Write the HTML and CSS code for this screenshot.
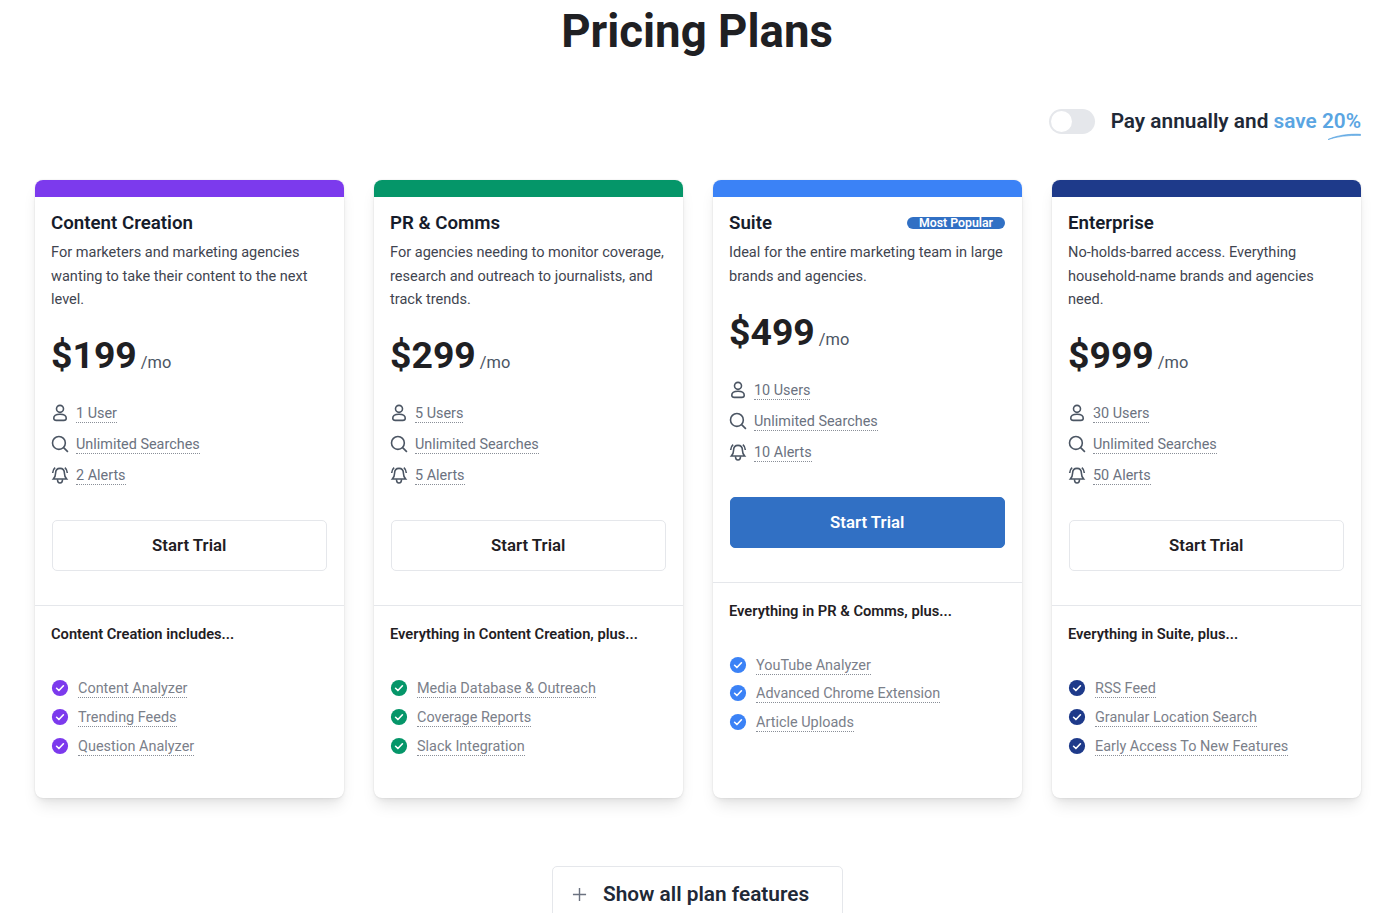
FILE: index.html
```html
<!DOCTYPE html>
<html lang="en">
<head>
  <meta charset="UTF-8">
  <meta name="viewport" content="width=device-width, initial-scale=1.0">
  <title>Pricing Plans</title>
  <link rel="stylesheet" href="styles.css">
</head>
<body>
  <svg class="sprite" width="0" height="0">
    <symbol id="i-user" viewBox="0 0 24 24"><circle cx="12" cy="7" r="4.200"/><path d="M4.500 18.200c0-3 3.400-4.700 7.500-4.700s7.500 1.700 7.500 4.700c0 1.700-1.300 2.600-3 2.600H7.500c-1.700 0-3-.9-3-2.600z"/></symbol>
    <symbol id="i-search" viewBox="0 0 24 24"><circle cx="10.700" cy="10.700" r="7.700"/><path d="M16.300 16.300L21.500 21.500"/></symbol>
    <symbol id="i-bell" viewBox="0 0 24 24"><path d="M12 4c-3.200 0-5.300 2.500-5.300 5.800 0 3.600-1.200 5.200-2.700 7h16c-1.500-1.800-2.700-3.400-2.700-7C17.300 6.500 15.200 4 12 4z"/><path d="M9 17c0 2.800 1.300 4.500 3 4.500s3-1.700 3-4.500"/><path d="M3.200 9.500c.1-2.800 1-4.800 3-6.300M20.800 9.500c-.1-2.800-1-4.800-3-6.300"/></symbol>
    <symbol id="i-check" viewBox="0 0 20 20"><circle cx="10" cy="10" r="9"/><path class="tick" d="M6.200 10.300l2.600 2.500 5-5.300"/></symbol>
  </svg>

  <h1 class="page-title">Pricing Plans</h1>

  <div class="billing">
    <span class="toggle"><span class="knob"></span></span>
    <span class="billing-text">Pay annually and <span class="save">save <span class="pct">20%<svg class="swoosh" viewBox="0 0 34 8" preserveAspectRatio="none"><path d="M1 7.500C9 3 21 .8 33.500 1.500L33.500 2.800C21 2.300 10 4 1 7.500z"/></svg></span></span></span>
  </div>

  <div class="plans">
    <section class="plan plan-purple">
      <div class="plan-bar"></div>
      <div class="plan-top">
        <div class="plan-head"><h2>Content Creation</h2></div>
        <p class="plan-desc">For marketers and marketing agencies wanting to take their content to the next level.</p>
        <div class="price"><strong>$199</strong> <span>/mo</span></div>
        <ul class="limits">
          <li><svg class="ico"><use href="#i-user"/></svg><span class="dotted">1 User</span></li>
          <li><svg class="ico"><use href="#i-search"/></svg><span class="dotted">Unlimited Searches</span></li>
          <li><svg class="ico"><use href="#i-bell"/></svg><span class="dotted">2 Alerts</span></li>
        </ul>
        <button class="trial">Start Trial</button>
      </div>
      <div class="plan-bottom">
        <h3>Content Creation includes...</h3>
        <ul class="features">
          <li><svg class="check"><use href="#i-check"/></svg><span class="dotted">Content Analyzer</span></li>
          <li><svg class="check"><use href="#i-check"/></svg><span class="dotted">Trending Feeds</span></li>
          <li><svg class="check"><use href="#i-check"/></svg><span class="dotted">Question Analyzer</span></li>
        </ul>
      </div>
    </section>

    <section class="plan plan-green">
      <div class="plan-bar"></div>
      <div class="plan-top">
        <div class="plan-head"><h2>PR &amp; Comms</h2></div>
        <p class="plan-desc">For agencies needing to monitor coverage, research and outreach to journalists, and track trends.</p>
        <div class="price"><strong>$299</strong> <span>/mo</span></div>
        <ul class="limits">
          <li><svg class="ico"><use href="#i-user"/></svg><span class="dotted">5 Users</span></li>
          <li><svg class="ico"><use href="#i-search"/></svg><span class="dotted">Unlimited Searches</span></li>
          <li><svg class="ico"><use href="#i-bell"/></svg><span class="dotted">5 Alerts</span></li>
        </ul>
        <button class="trial">Start Trial</button>
      </div>
      <div class="plan-bottom">
        <h3>Everything in Content Creation, plus...</h3>
        <ul class="features">
          <li><svg class="check"><use href="#i-check"/></svg><span class="dotted">Media Database &amp; Outreach</span></li>
          <li><svg class="check"><use href="#i-check"/></svg><span class="dotted">Coverage Reports</span></li>
          <li><svg class="check"><use href="#i-check"/></svg><span class="dotted">Slack Integration</span></li>
        </ul>
      </div>
    </section>

    <section class="plan plan-blue">
      <div class="plan-bar"></div>
      <div class="plan-top">
        <div class="plan-head"><h2>Suite</h2><span class="badge">Most Popular</span></div>
        <p class="plan-desc">Ideal for the entire marketing team in large brands and agencies.</p>
        <div class="price"><strong>$499</strong> <span>/mo</span></div>
        <ul class="limits">
          <li><svg class="ico"><use href="#i-user"/></svg><span class="dotted">10 Users</span></li>
          <li><svg class="ico"><use href="#i-search"/></svg><span class="dotted">Unlimited Searches</span></li>
          <li><svg class="ico"><use href="#i-bell"/></svg><span class="dotted">10 Alerts</span></li>
        </ul>
        <button class="trial trial-solid">Start Trial</button>
      </div>
      <div class="plan-bottom">
        <h3>Everything in PR &amp; Comms, plus...</h3>
        <ul class="features">
          <li><svg class="check"><use href="#i-check"/></svg><span class="dotted">YouTube Analyzer</span></li>
          <li><svg class="check"><use href="#i-check"/></svg><span class="dotted">Advanced Chrome Extension</span></li>
          <li><svg class="check"><use href="#i-check"/></svg><span class="dotted">Article Uploads</span></li>
        </ul>
      </div>
    </section>

    <section class="plan plan-navy">
      <div class="plan-bar"></div>
      <div class="plan-top">
        <div class="plan-head"><h2>Enterprise</h2></div>
        <p class="plan-desc">No-holds-barred access. Everything household-name brands and agencies need.</p>
        <div class="price"><strong>$999</strong> <span>/mo</span></div>
        <ul class="limits">
          <li><svg class="ico"><use href="#i-user"/></svg><span class="dotted">30 Users</span></li>
          <li><svg class="ico"><use href="#i-search"/></svg><span class="dotted">Unlimited Searches</span></li>
          <li><svg class="ico"><use href="#i-bell"/></svg><span class="dotted">50 Alerts</span></li>
        </ul>
        <button class="trial">Start Trial</button>
      </div>
      <div class="plan-bottom">
        <h3>Everything in Suite, plus...</h3>
        <ul class="features">
          <li><svg class="check"><use href="#i-check"/></svg><span class="dotted">RSS Feed</span></li>
          <li><svg class="check"><use href="#i-check"/></svg><span class="dotted">Granular Location Search</span></li>
          <li><svg class="check"><use href="#i-check"/></svg><span class="dotted">Early Access To New Features</span></li>
        </ul>
      </div>
    </section>
  </div>

  <div class="show-all">
    <button class="show-all-btn">
      <svg class="plus" viewBox="0 0 16 16"><path d="M8 1v14M1 8h14"/></svg>
      Show all plan features
    </button>
  </div>
</body>
</html>
```

FILE: styles.css
```css
html, body {
  height: 913px;
  overflow: hidden;
}
body {
  margin: 0;
  padding: 0 39px 0 35px;
  background: #fff;
  font-family: Roboto, "Liberation Sans", sans-serif;
  color: #1f2937;
}
.sprite {
  display: none;
}
.page-title {
  margin: 0;
  padding: 4px 2px 0 0;
  height: 88px;
  font-size: 45.600px;
  line-height: 55px;
  font-weight: 700;
  color: #1f2023;
  text-align: center;
}
.billing {
  display: flex;
  justify-content: flex-end;
  align-items: center;
  gap: 16px;
  height: 58px;
}
.toggle {
  width: 46px;
  height: 25px;
  border-radius: 13px;
  background: #e5e7eb;
  padding: 2px;
  box-sizing: border-box;
}
.knob {
  display: block;
  width: 21px;
  height: 21px;
  border-radius: 50%;
  background: #fff;
}
.billing-text {
  font-size: 20.800px;
  font-weight: 600;
  color: #1f2937;
}
.save {
  color: #5aa5e2;
}
.pct {
  position: relative;
}
.swoosh {
  position: absolute;
  right: 0;
  bottom: -7px;
  width: 34px;
  height: 7px;
  fill: #5aa5e2;
  stroke: #5aa5e2;
  stroke-width: .7;
}
.plans {
  display: grid;
  grid-template-columns: repeat(4, 1fr);
  gap: 30px;
  margin-top: 30px;
}
.plan {
  display: flex;
  flex-direction: column;
  height: 618px;
  background: #fff;
  border-radius: 8px;
  box-shadow: 0 10px 15px -3px rgba(0,0,0,0.1), 0 4px 6px -2px rgba(0,0,0,0.05), 0 0 2px rgba(0,0,0,0.12);
  overflow: hidden;
}
.plan-bar {
  height: 17px;
  flex: none;
  background: var(--accent);
}
.plan-purple { --accent: #7c3aed; }
.plan-green { --accent: #059669; }
.plan-blue { --accent: #3b82f6; }
.plan-navy { --accent: #1e3a8a; }
.plan-top {
  padding: 15px 17px 34px 16px;
  border-bottom: 1px solid #e5e7eb;
}
.plan-head {
  display: flex;
  justify-content: space-between;
  align-items: center;
  height: 22px;
}
.plan-head h2 {
  margin: 0;
  font-size: 18.700px;
  font-weight: 600;
  color: #161c2b;
}
.badge {
  background: #3170c4;
  color: #fff;
  font-size: 12.300px;
  font-weight: 600;
  line-height: 12px;
  padding: 0 12px;
  border-radius: 7px;
}
.plan-desc {
  margin: 7.300px 0 0;
  font-size: 14.550px;
  line-height: 23.300px;
  color: #3f4550;
}
.price {
  margin-top: 15.700px;
  display: flex;
  align-items: baseline;
  gap: 4px;
  height: 56px;
  line-height: 56px;
}
.price strong {
  font-size: 37.400px;
  font-weight: 700;
  color: #1f2023;
}
.price span {
  font-size: 16.400px;
  color: #4b5563;
}
.limits, .features {
  list-style: none;
  margin: 0;
  padding: 0;
}
.limits {
  margin-top: 16px;
}
.limits li {
  display: flex;
  align-items: center;
  gap: 6px;
  height: 31px;
  font-size: 14.400px;
  color: #6b7280;
}
.ico {
  width: 20px;
  height: 20px;
  margin: -2px 0 0 -1px;
  fill: none;
  stroke: #4b5563;
  stroke-width: 1.900;
}
.dotted {
  border-bottom: 1px dotted #8a8f98;
  line-height: 16px;
}
.trial {
  display: block;
  width: calc(100% - 1.500px);
  height: 51px;
  margin: 28px 0 0 1px;
  background: #fff;
  border: 1px solid #e5e7eb;
  border-radius: 5px;
  font-family: inherit;
  font-size: 16.800px;
  font-weight: 600;
  color: #1f2023;
}
.trial-solid {
  background: #3170c4;
  border-color: #3170c4;
  color: #fff;
}
.plan-bottom {
  padding: 19px 17px 0 16px;
}
.plan-bottom h3 {
  margin: 0;
  font-size: 14.700px;
  line-height: 18px;
  font-weight: 600;
  color: #1f2023;
}
.features {
  margin-top: 32px;
}
.features li {
  display: flex;
  align-items: center;
  gap: 9px;
  height: 28.900px;
  font-size: 14.450px;
  color: #7b808a;
}
.check {
  width: 18px;
  height: 18px;
  margin-top: -3px;
  fill: var(--accent);
}
.tick {
  fill: none;
  stroke: #fff;
  stroke-width: 1.800;
  stroke-linecap: round;
  stroke-linejoin: round;
}
.show-all {
  display: flex;
  justify-content: center;
  margin: 68px 1px 0 0;
}
.show-all-btn {
  display: flex;
  align-items: center;
  gap: 16px;
  width: 291px;
  height: 56px;
  padding: 0 0 0 19px;
  background: #fff;
  border: 1px solid #e5e7eb;
  border-radius: 5px;
  font-family: inherit;
  font-size: 20.800px;
  font-weight: 600;
  color: #1f2937;
}
.plus {
  width: 15px;
  height: 15px;
  fill: none;
  stroke: #6b7280;
  stroke-width: 1.500;
}
```
